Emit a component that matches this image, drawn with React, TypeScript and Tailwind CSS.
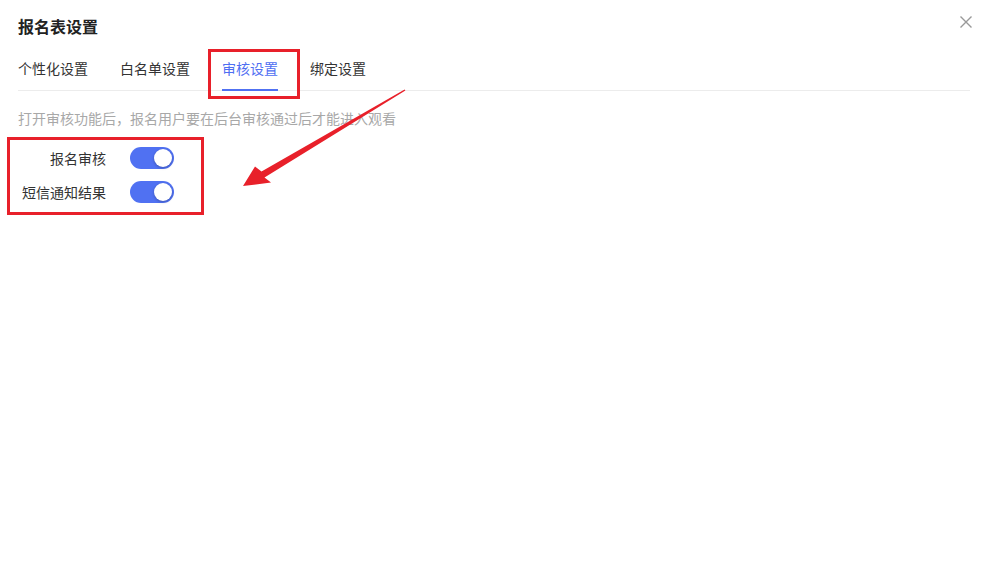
import { useState } from 'react';

const tabs = ['个性化设置', '白名单设置', '审核设置', '绑定设置'];

function Toggle({ on, onChange }: { on: boolean; onChange: () => void }) {
  return (
    <button
      onClick={onChange}
      className={`relative h-[22px] w-[44px] rounded-full transition-colors ${on ? 'bg-[#5071f2]' : 'bg-[#c9cdd4]'}`}
    >
      <span
        className={`absolute top-[2px] h-[18px] w-[18px] rounded-full bg-white shadow-[0_1px_3px_rgba(0,0,0,0.25)] transition-all ${on ? 'left-[24px]' : 'left-[2px]'}`}
      />
    </button>
  );
}

export default function App() {
  const [active, setActive] = useState(2);
  const [audit, setAudit] = useState(true);
  const [sms, setSms] = useState(true);

  return (
    <div
      className="relative h-[565px] w-[987px] overflow-hidden bg-white pl-[18px] pr-[17px] pt-[15px] text-[#333]"
      style={{ fontFamily: '"Noto Sans CJK SC", "Noto Sans", sans-serif' }}
    >
      <h1 className="h-[22px] text-[16px] font-semibold leading-[22px] text-[#222]">报名表设置</h1>

      {/* close */}
      <button className="absolute right-[15px] top-[16px] text-[#999]">
        <svg width="12" height="12" viewBox="0 0 12 12" fill="none" stroke="currentColor" strokeWidth="1.4">
          <path d="M0.5 0.5 L11.5 11.5 M11.5 0.5 L0.5 11.5" />
        </svg>
      </button>

      <div className="mt-[10px] flex gap-[32px] border-b border-[#ececec]">
        {tabs.map((t, i) => (
          <button
            key={t}
            onClick={() => setActive(i)}
            className={`-mb-px border-b-2 pb-[11px] pt-[11px] text-[14px] leading-[20px] ${
              i === active ? 'border-[#5071f2] text-[#4e6ef2]' : 'border-transparent text-[#333]'
            }`}
          >
            {t}
          </button>
        ))}
      </div>

      <p className="mt-[17px] text-[14px] leading-[20px] text-[#a8a8a8]">
        打开审核功能后，报名用户要在后台审核通过后才能进入观看
      </p>

      <div className="mt-[19px] flex flex-col gap-[12px]">
        <div className="flex items-center gap-[24px]">
          <span className="w-[88px] text-right text-[14px] leading-[22px]">报名审核</span>
          <Toggle on={audit} onChange={() => setAudit(!audit)} />
        </div>
        <div className="flex items-center gap-[24px]">
          <span className="w-[88px] text-right text-[14px] leading-[22px]">短信通知结果</span>
          <Toggle on={sms} onChange={() => setSms(!sms)} />
        </div>
      </div>

      {/* annotations */}
      <div className="pointer-events-none absolute left-[208px] top-[49px] h-[50px] w-[92px] border-[3px] border-[#e8202a]" />
      <div className="pointer-events-none absolute left-[7px] top-[137px] h-[78px] w-[197px] border-[3px] border-[#e8202a]" />
      <svg className="pointer-events-none absolute left-0 top-0" width="987" height="565">
        <polygon
          fill="#e8202a"
          points="404.6,89.4 405.4,90.6 264.5,177.6 271,182.5 243,186 255,166.5 261.5,171.5"
        />
      </svg>
    </div>
  );
}
